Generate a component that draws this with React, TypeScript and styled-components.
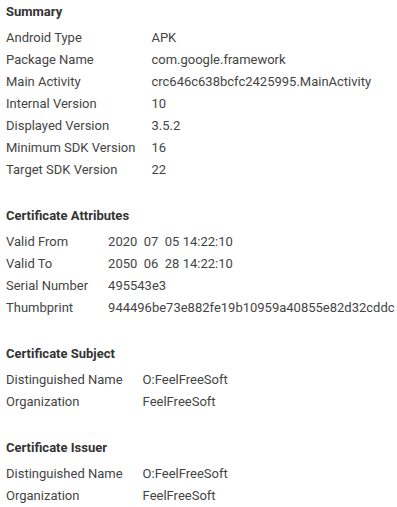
import React from 'react'
import styled, { createGlobalStyle } from 'styled-components'

const GlobalStyle = createGlobalStyle`
    body {
        margin: 0;
        background: #ffffff;
        font-family: Roboto, "Noto Sans", sans-serif;
        color: #444444;
    }
`

type Row = [string, string]

const sections: { title: string; gap: number; rows: Row[] }[] = [
    {
        title: 'Summary',
        gap: 16,
        rows: [
            ['Android Type', 'APK'],
            ['Package Name', 'com.google.framework'],
            ['Main Activity', 'crc646c638bcfc2425995.MainActivity'],
            ['Internal Version', '10'],
            ['Displayed Version', '3.5.2'],
            ['Minimum SDK Version', '16'],
            ['Target SDK Version', '22'],
        ],
    },
    {
        title: 'Certificate Attributes',
        gap: 20,
        rows: [
            ['Valid From', '2020  07  05 14:22:10'],
            ['Valid To', '2050  06  28 14:22:10'],
            ['Serial Number', '495543e3'],
            ['Thumbprint', '944496be73e882fe19b10959a40855e82d32cddc'],
        ],
    },
    {
        title: 'Certificate Subject',
        gap: 20,
        rows: [
            ['Distinguished Name', 'O:FeelFreeSoft'],
            ['Organization', 'FeelFreeSoft'],
        ],
    },
    {
        title: 'Certificate Issuer',
        gap: 20,
        rows: [
            ['Distinguished Name', 'O:FeelFreeSoft'],
            ['Organization', 'FeelFreeSoft'],
        ],
    },
]

export default function App() {
    return (
        <Page>
            <GlobalStyle />
            {sections.map((section) => (
                <Section key={section.title}>
                    <Heading>{section.title}</Heading>
                    <Grid $gap={section.gap}>
                        {section.rows.map(([label, value]) => (
                            <React.Fragment key={label}>
                                <Label>{label}</Label>
                                <Value>{value}</Value>
                            </React.Fragment>
                        ))}
                    </Grid>
                </Section>
            ))}
        </Page>
    )
}

const Page = styled.main`
    padding: 4px 6px;
    display: flex;
    flex-direction: column;
    gap: 28px;
`

const Section = styled.section`
    display: flex;
    flex-direction: column;
`

const Heading = styled.h2`
    margin: 0 0 6px;
    font-size: 13px;
    font-weight: 700;
    line-height: 16px;
    color: #333333;
`

const Grid = styled.div<{ $gap: number }>`
    display: grid;
    grid-template-columns: max-content 1fr;
    column-gap: ${(p) => p.$gap}px;
    grid-auto-rows: 22px;
    align-items: center;
    font-size: 13px;
`

const Label = styled.div`
    white-space: nowrap;
`

const Value = styled.div`
    white-space: pre;
`
